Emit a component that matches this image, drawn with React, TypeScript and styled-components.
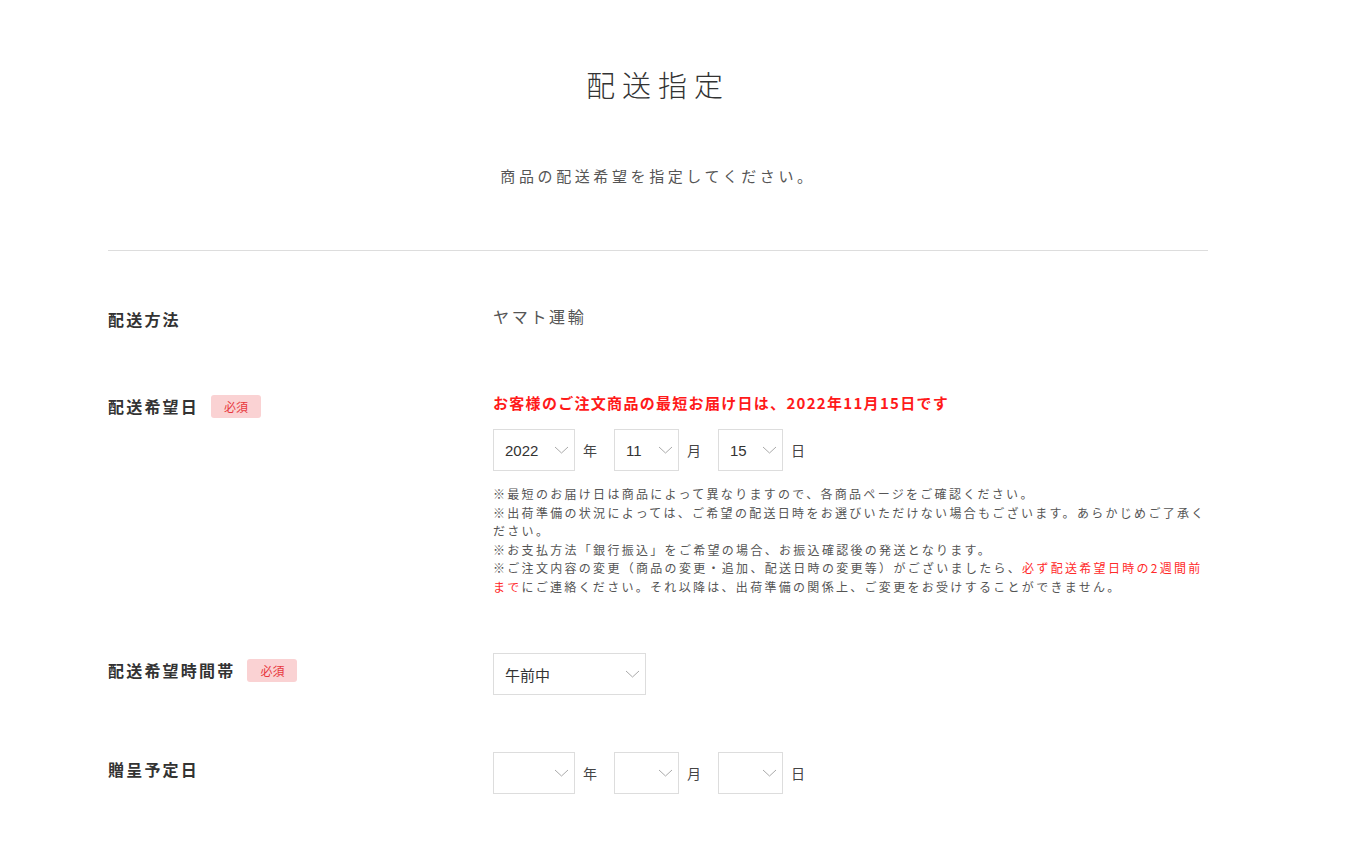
import React from 'react'
import styled, { createGlobalStyle } from 'styled-components'

const GlobalStyle = createGlobalStyle`
  body {
    margin: 0;
    background: #fff;
    font-family: "Noto Sans CJK JP", "Noto Sans", sans-serif;
    color: #333;
  }
`

const Container = styled.div`
  width: 1100px;
  margin-left: 108px;
  padding-bottom: 60px;
`

const Title = styled.h1`
  margin: 0;
  padding-top: 62px;
  text-align: center;
  font-size: 29px;
  font-weight: 300;
  letter-spacing: 7px;
  line-height: 44px;
  color: #333;
`

const Lead = styled.p`
  margin: 58px 0 0;
  text-align: center;
  font-size: 15px;
  letter-spacing: 3.6px;
  line-height: 24px;
  color: #555;
`

const Divider = styled.hr`
  margin: 62px 0 0;
  border: none;
  border-top: 1px solid #ddd;
`

const Form = styled.div`
  padding-top: 50px;
  display: flex;
  flex-direction: column;
  gap: 57px;
`

const Row = styled.div`
  display: grid;
  grid-template-columns: 385px 1fr;
`

const Label = styled.div<{ $offset?: number }>`
  display: flex;
  align-items: center;
  gap: 12px;
  font-size: 16px;
  font-weight: bold;
  letter-spacing: 2.2px;
  color: #333;
  height: 30px;
  margin-top: ${(p) => p.$offset ?? 0}px;
`

const Required = styled.span`
  display: inline-flex;
  align-items: center;
  justify-content: center;
  width: 50px;
  height: 23px;
  border-radius: 3px;
  background: #fad2d3;
  color: #e8383d;
  font-size: 12px;
  font-weight: normal;
  letter-spacing: 0;
`

const Value = styled.div`
  font-size: 16px;
  letter-spacing: 2.7px;
  line-height: 30px;
  color: #555;
`

const Notice = styled.div`
  font-size: 15px;
  font-weight: bold;
  letter-spacing: 1.3px;
  line-height: 24px;
  color: #ff1a1a;
`

const DateLine = styled.div<{ $top?: number }>`
  display: flex;
  align-items: center;
  margin-top: ${(p) => p.$top ?? 0}px;
`

const SelectBox = styled.div<{ $w: number }>`
  position: relative;
  box-sizing: border-box;
  width: ${(p) => p.$w}px;
  height: 42px;
  border: 1px solid #ddd;
  padding-left: 11px;
  display: flex;
  align-items: center;
  font-family: "Liberation Sans", "Noto Sans CJK JP", sans-serif;
  font-size: 15px;
  color: #333;
`

const Chevron = styled.svg`
  position: absolute;
  right: 5px;
  top: 50%;
  margin-top: -4px;
`

const Unit = styled.span`
  margin: 0 17px 0 8px;
  font-size: 14px;
  color: #444;
`

const Notes = styled.div`
  margin-top: 14px;
  font-size: 12px;
  letter-spacing: 2.3px;
  line-height: 18.5px;
  color: #555;
`

const Em = styled.span`
  color: #ff2a2a;
`

function Select({ width, value }: { width: number; value?: string }) {
  return (
    <SelectBox $w={width}>
      {value}
      <Chevron width="15" height="8" viewBox="0 0 15 8">
        <path d="M1 1 L7.5 7 L14 1" fill="none" stroke="#aaa" strokeWidth="1" />
      </Chevron>
    </SelectBox>
  )
}

function DatePicker({ y, m, d, top }: { y?: string; m?: string; d?: string; top?: number }) {
  return (
    <DateLine $top={top}>
      <Select width={82} value={y} />
      <Unit>年</Unit>
      <Select width={65} value={m} />
      <Unit>月</Unit>
      <Select width={65} value={d} />
      <Unit>日</Unit>
    </DateLine>
  )
}

export default function App() {
  return (
    <>
      <GlobalStyle />
      <Container>
        <Title>配送指定</Title>
        <Lead>商品の配送希望を指定してください。</Lead>
        <Divider />

        <Form>
          <Row>
            <Label $offset={3}>配送方法</Label>
            <Value>ヤマト運輸</Value>
          </Row>

          <Row>
            <Label $offset={0}>
              配送希望日
              <Required>必須</Required>
            </Label>
            <div>
              <Notice>お客様のご注文商品の最短お届け日は、2022年11月15日です</Notice>
              <DatePicker y="2022" m="11" d="15" top={14} />
              <Notes>
                ※最短のお届け日は商品によって異なりますので、各商品ページをご確認ください。
                <br />
                ※出荷準備の状況によっては、ご希望の配送日時をお選びいただけない場合もございます。あらかじめご了承ください。
                <br />
                ※お支払方法「銀行振込」をご希望の場合、お振込確認後の発送となります。
                <br />
                ※ご注文内容の変更（商品の変更・追加、配送日時の変更等）がございましたら、
                <Em>必ず配送希望日時の2週間前まで</Em>
                にご連絡ください。それ以降は、出荷準備の関係上、ご変更をお受けすることができません。
              </Notes>
            </div>
          </Row>

          <Row>
            <Label $offset={2}>
              配送希望時間帯
              <Required>必須</Required>
            </Label>
            <DateLine>
              <Select width={153} value="午前中" />
            </DateLine>
          </Row>

          <Row>
            <Label $offset={2}>贈呈予定日</Label>
            <DatePicker />
          </Row>
        </Form>
      </Container>
    </>
  )
}
